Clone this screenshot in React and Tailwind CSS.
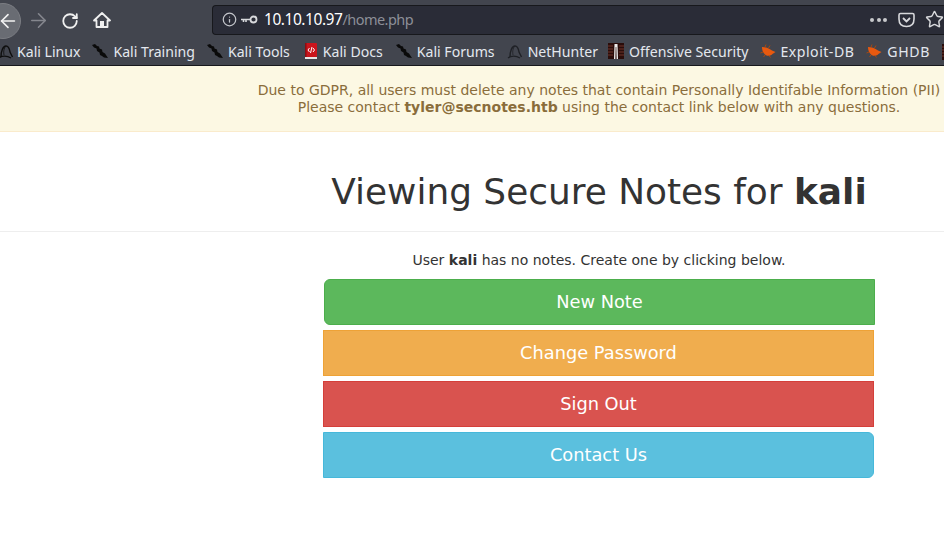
import { ArrowLeft, ArrowRight, RotateCw, Info, Star } from "lucide-react";

function KaliIcon({ dim }) {
  const c = dim ? "#1f2126" : "#0e0e0e";
  return (
    <svg width="16" height="16" viewBox="0 0 16 16" className="shrink-0">
      <path d="M3 14 C3 8 5 3 8 3 C10.5 3 11.5 6 12 9 L14.5 14" fill="none" stroke={c} strokeWidth="1.4" />
      <path d="M1 15 C4 12.5 9 12.5 13 15" fill="none" stroke={c} strokeWidth="1.2" />
      <path d="M7 4 C5.5 7 5.5 9 6 12" fill="none" stroke={c} strokeWidth="0.8" />
    </svg>
  );
}

function DragonIcon() {
  return (
    <svg width="16" height="16" viewBox="0 0 16 16" className="shrink-0">
      <path d="M0 2 L3 1 L5 3 L7 3.5 L7.5 5.5 L10 6.5 L10.5 9 L13 10.5 L16 15 L12 14.5 L10 13 L8 12 L7.5 9.5 L5 8 L4.5 5.5 L2 4.5 Z" fill="#0a0a0a" />
    </svg>
  );
}

function BookIcon() {
  return (
    <svg width="14" height="16" viewBox="0 0 14 16" className="shrink-0">
      <rect x="1" y="0" width="12" height="14" rx="1" fill="#c9141c" />
      <rect x="1" y="14" width="12" height="2" fill="#e6e6e6" />
      <rect x="1" y="0" width="1.5" height="14" fill="#8c0d12" />
      <path d="M5.5 5 L4 7 L5.5 9 M9 5 L10.5 7 L9 9 M8 4 L6.5 10" stroke="#fff" strokeWidth="1" fill="none" />
    </svg>
  );
}

function OffsecIcon() {
  return (
    <svg width="16" height="16" viewBox="0 0 16 16" className="shrink-0">
      <rect width="16" height="16" fill="#2a0d0b" />
      <path d="M0 3 H5 M0 6 H5 M0 9 H5 M0 12 H5 M11 3 H16 M11 6 H16 M11 9 H16 M11 12 H16" stroke="#6e352b" strokeWidth="1" />
      <path d="M6 16 L6.5 1 H9.5 L10 16 H8.6 L8.3 4 H7.7 L7.4 16 Z" fill="#eeeeee" />
    </svg>
  );
}

function BugIcon() {
  return (
    <svg width="16" height="14" viewBox="0 0 16 14" className="shrink-0">
      <path d="M2 3 C5 3 9 4 12 6.5 L15.5 8 L12.5 10 C11 12 7 12.5 5 10.5 C3 9 2 6 2 3 Z" fill="#e8590f" />
      <path d="M5 3 L6 0.5 M8.5 4 L10 1.5 M5 11 L3.5 13 M9 11.5 L10.5 13.5 M3 8 L0.5 9" stroke="#a9480f" strokeWidth="1" />
    </svg>
  );
}

function Bookmark({ icon, label, gap = "gap-[5px]", className = "", labelClass = "" }) {
  return (
    <div className={`flex items-center shrink-0 ${gap} ${className}`}>
      {icon}
      <span className={`text-[14.1px] text-[#e4e8ee] whitespace-nowrap ${labelClass}`}>{label}</span>
    </div>
  );
}

function NoteButton({ label, className }) {
  return (
    <a href="#" className={`flex items-center justify-center h-[46px] border text-[17.8px] text-white ${className}`}>
      {label}
    </a>
  );
}

export default function App() {
  return (
    <div className="w-[944px] h-[537px] overflow-hidden bg-white font-['DejaVu_Sans',sans-serif]">
      <header className="h-[66px] bg-[#42454e] border-b border-[#17181c] font-['Noto_Sans',sans-serif]">
        <div className="flex items-center h-[36px] pt-px">
          <div className="relative w-[212px] h-full shrink-0">
            <div className="absolute left-[-15px] top-[2px] w-[36px] h-[36px] rounded-full bg-[#696c73] border border-[#7b7d83] flex items-center justify-center">
              <ArrowLeft size={22} color="#f2f2f2" strokeWidth={1.8} className="ml-[10px]" />
            </div>
            <ArrowRight size={23} color="#85878e" strokeWidth={1.7} className="absolute left-[27px] top-[8px]" />
            <RotateCw size={18} color="#f0f0f0" strokeWidth={2.4} className="absolute left-[61px] top-[11px]" />
            <svg width="18" height="18" viewBox="0 0 18 18" className="absolute left-[93px] top-[10px]">
              <path d="M9 2 L17 9.5 H14.5 V16 H3.5 V9.5 H1 Z" fill="none" stroke="#f0f0f0" strokeWidth="1.8" strokeLinejoin="round" />
              <rect x="7" y="10" width="4" height="6" fill="#f0f0f0" />
            </svg>
          </div>
          <div className="flex items-center flex-1 h-[30px] mt-[2px] bg-[#2a2c37] border border-[#17181c] border-r-0 rounded-l-[4px] pl-[9px]">
            <Info size={15} color="#c4c6cb" />
            <svg width="17" height="9" viewBox="0 0 17 9" className="ml-[4px]">
              <circle cx="12.5" cy="4.5" r="3" fill="none" stroke="#d8d9dc" strokeWidth="1.8" />
              <path d="M0 4.5 H9.5 M2.5 4.5 V7 M5 4.5 V7" stroke="#d8d9dc" strokeWidth="1.6" />
            </svg>
            <span className="ml-[6px] text-[15.5px] tracking-[-0.45px] text-white">
              10.10.10.97<span className="text-[14.5px] tracking-[-0.55px] text-[#8d8f97]">/home.php</span>
            </span>
            <div className="ml-auto flex items-center">
              <span className="flex gap-[2.5px]">
                <span className="w-[4px] h-[4px] rounded-full bg-[#c8c9cc]" />
                <span className="w-[4px] h-[4px] rounded-full bg-[#c8c9cc]" />
                <span className="w-[4px] h-[4px] rounded-full bg-[#c8c9cc]" />
              </span>
              <svg width="17" height="16" viewBox="0 0 17 16" className="ml-[11px]">
                <path d="M2.5 1.5 H14.5 Q16 1.5 16 3 V7 Q16 14.5 8.5 14.5 Q1 14.5 1 7 V3 Q1 1.5 2.5 1.5 Z" fill="none" stroke="#d8d9dc" strokeWidth="1.6" />
                <path d="M5 6 L8.5 9.5 L12 6" fill="none" stroke="#d8d9dc" strokeWidth="1.8" />
              </svg>
              <Star size={19} color="#d8d9dc" strokeWidth={1.8} className="ml-[10px] shrink-0" />
            </div>
          </div>
        </div>
        <div className="flex items-center gap-[12px] h-[29px] ml-[-2px] pt-[2px]">
          <Bookmark icon={<KaliIcon />} label="Kali Linux" gap="gap-[3px]" />
          <Bookmark icon={<DragonIcon />} label="Kali Training" />
          <Bookmark icon={<DragonIcon />} label="Kali Tools" />
          <Bookmark icon={<BookIcon />} label="Kali Docs" className="ml-[2px]" />
          <Bookmark icon={<DragonIcon />} label="Kali Forums" className="ml-[1px]" />
          <Bookmark icon={<KaliIcon dim />} label="NetHunter" />
          <Bookmark icon={<OffsecIcon />} label="Offensive Security" className="ml-[-2px]" />
          <Bookmark icon={<BugIcon />} label="Exploit-DB" className="ml-[-1px]" labelClass="tracking-[0.5px]" />
          <Bookmark icon={<BugIcon />} label="GHDB" labelClass="tracking-[0.6px]" />
          <OffsecIcon />
        </div>
      </header>

      <div className="w-[1198px]">
        <div className="h-[66px] bg-[#fcf8e3] border-b border-[#faebcc] text-[#8a6d3b] text-[14px] leading-[17px] text-center pt-[16px]">
          <p>Due to GDPR, all users must delete any notes that contain Personally Identifable Information (PII)</p>
          <p>
            Please contact <strong>tyler@secnotes.htb</strong> using the contact link below with any questions.
          </p>
        </div>

        <div className="h-[100px] border-b border-[#eeeeee] text-center pt-[40px]">
          <h1 className="text-[35.9px] leading-[40px] text-[#333333] font-normal">
            Viewing Secure Notes for <strong>kali</strong>
          </h1>
        </div>

        <p className="mt-[18px] text-[14px] leading-[20px] text-[#333333] text-center">
          User <strong>kali</strong> has no notes. Create one by clicking below.
        </p>

        <div className="mt-[9px] ml-[323px] w-[552px] flex flex-col gap-[5px]">
          <NoteButton label="New Note" className="ml-px bg-[#5cb85c] border-[#4cae4c] rounded-l-[6px]" />
          <NoteButton label="Change Password" className="mr-px bg-[#f0ad4e] border-[#eea236]" />
          <NoteButton label="Sign Out" className="mr-px bg-[#d9534f] border-[#d43f3a]" />
          <NoteButton label="Contact Us" className="mr-px bg-[#5bc0de] border-[#46b8da] rounded-r-[6px]" />
        </div>
      </div>
    </div>
  );
}
